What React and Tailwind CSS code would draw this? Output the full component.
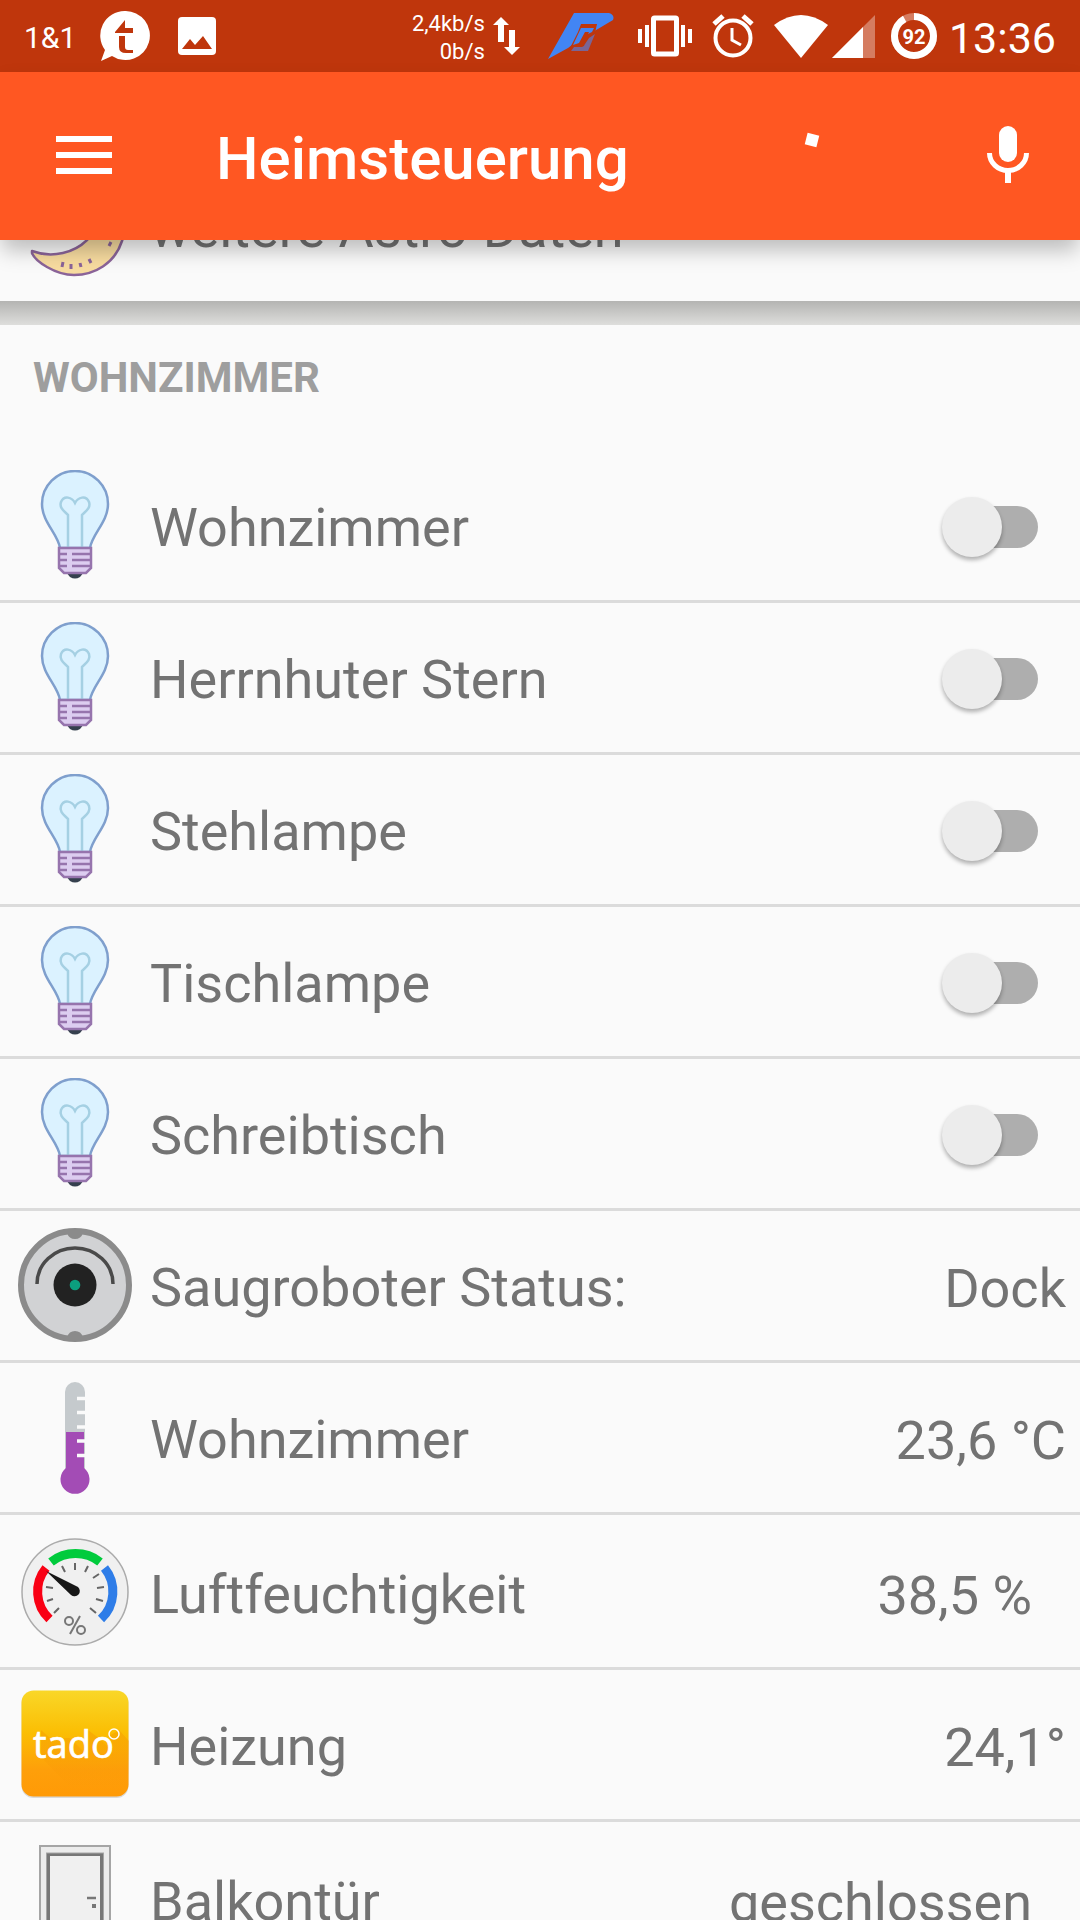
import { useState } from 'react';

const items = [
    { id: 'l1', icon: 'bulb', label: 'Wohnzimmer', type: 'switch' },
    { id: 'l2', icon: 'bulb', label: 'Herrnhuter Stern', type: 'switch' },
    { id: 'l3', icon: 'bulb', label: 'Stehlampe', type: 'switch' },
    { id: 'l4', icon: 'bulb', label: 'Tischlampe', type: 'switch' },
    { id: 'l5', icon: 'bulb', label: 'Schreibtisch', type: 'switch' },
    { id: 'robot', icon: 'robot', label: 'Saugroboter Status:', value: 'Dock' },
    { id: 'temp', icon: 'thermo', label: 'Wohnzimmer', value: '23,6 °C' },
    { id: 'hum', icon: 'gauge', label: 'Luftfeuchtigkeit', value: '38,5 %', link: true },
    { id: 'heat', icon: 'tado', label: 'Heizung', value: '24,1°' },
    { id: 'door', icon: 'door', label: 'Balkontür', value: 'geschlossen', link: true },
];

/* ── Row icons ── */
const Bulb = () => (
    <svg viewBox="0 0 70 110" className="w-[70px] h-[110px]">
        <path d="M20 78C18 64 2 52 2 34a33 33 0 0 1 66 0C68 52 52 64 50 78Z" fill="#dbf2ff" stroke="#7f9fcd" strokeWidth="2.5" />
        <path d="M28 78V45c-4-4-9-7-7-13 3-7 11-5 14 1 3-6 11-8 14-1 2 6-3 9-7 13v33" fill="none" stroke="#a5d0e3" strokeWidth="2.5" />
        <path d="M26 102h18l-4 5q-5 3-10 0Z" fill="#35404e" />
        <path d="M19 78h32v20l-5 5H24l-5-5Z" fill="#dccdf0" stroke="#9674ad" strokeWidth="2.5" />
        <path d="M20 84h7M32 84h18M20 90h7M32 90h18M20 96h7M32 96h18" stroke="#9674ad" strokeWidth="2.5" />
    </svg>
);

const Robot = () => (
    <svg viewBox="0 0 114 114" className="w-[114px] h-[114px]">
        <circle cx="57" cy="57" r="54" fill="#d1d2d4" stroke="#8b8b8b" strokeWidth="6" />
        <path d="M49 5h16q-2 6-8 6t-8-6ZM49 109h16q-2-6-8-6t-8 6Z" fill="#8b8b8b" />
        <path d="M19 56a38 36 0 0 1 76 0" fill="none" stroke="#4a4a4a" strokeWidth="3.5" />
        <circle cx="57" cy="57" r="21.500" fill="#222" />
        <circle cx="57" cy="57" r="5.300" fill="#0c9f7e" />
    </svg>
);

const Thermometer = () => (
    <svg viewBox="0 0 32 114" className="w-8 h-[114px]">
        <path d="M6 92V12a10 10 0 0 1 20 0v80Z" fill="#c5cacd" />
        <path d="M7 52h18v36a14.500 14.500 0 1 1-18 0Z" fill="#a34cb5" />
        <path d="M18 18.500h10M18 32.500h10M18 47h10M18 61h10M18 75.500h10" stroke="#fafafa" strokeWidth="3.500" />
    </svg>
);

const Gauge = () => (
    <svg viewBox="0 0 108 108" className="w-[108px] h-[108px]">
        <circle cx="54" cy="54" r="53" fill="#f0f0f0" stroke="#ababab" strokeWidth="1.500" />
        <g fill="none" strokeWidth="9">
            <path d="M28.500 81A37.500 37.500 0 0 1 25 30" stroke="#f90014" />
            <path d="M30 24a40 40 0 0 1 49 0" stroke="#00cb3c" />
            <path d="M83.500 30a37.500 37.500 0 0 1-3.500 51" stroke="#2e7de8" />
        </g>
        <path d="M54 25v7M41 28l3 6M67 28l-3 6M78 36l-6 4M83 49l-7 1M82 63l-7-2M75 75l-6-5M33 75l5-5M26 63l6-2M25 49l7 1" stroke="#666" strokeWidth="2" />
        <path d="M25 33 57 49a5 5 0 1 1-7 8Z" fill="#171717" />
        <g fill="none" stroke="#777" strokeWidth="2">
            <circle cx="48" cy="83" r="4" />
            <circle cx="60" cy="92" r="4" />
            <path d="m59 78-10 18" />
        </g>
    </svg>
);

const Tado = () => (
    <svg viewBox="0 0 108 108" className="w-[108px] h-[108px]">
        <defs>
            <linearGradient id="tadoBg" x1="0" y1="0" x2="0" y2="1">
                <stop offset="0" stopColor="#f9d728" />
                <stop offset=".4" stopColor="#fbbe03" />
                <stop offset=".75" stopColor="#fe9f0a" />
                <stop offset="1" stopColor="#ff9a06" />
            </linearGradient>
            <linearGradient id="tadoShade" gradientUnits="userSpaceOnUse" x1="0" y1="38" x2="0" y2="98">
                <stop offset="0" stopColor="#f39000" stopOpacity=".4" />
                <stop offset="1" stopColor="#f39000" stopOpacity="0" />
            </linearGradient>
        </defs>
        <rect x=".5" y="1.500" width="107" height="106.500" rx="12" fill="#d9d9d9" />
        <rect x=".5" y=".5" width="107" height="106" rx="12" fill="url(#tadoBg)" />
        <path d="M20 67V40l9 8h20l14 14V40h4l12 9 9 9V46l10-6 10 11V96H48Z" fill="url(#tadoShade)" />
        <text x="12" y="68" fontSize="38" fill="#fff" stroke="#fff" strokeWidth=".7" fontFamily="'Open Sans', sans-serif">tado</text>
        <circle cx="93" cy="44" r="5" fill="none" stroke="#fff" strokeWidth="1.500" />
    </svg>
);

const Door = () => (
    <svg viewBox="0 0 72 108" className="w-[72px] h-[108px]">
        <rect x="1" y="1" width="70" height="110" fill="#ececec" stroke="#a5a5a5" strokeWidth="2" />
        <rect x="7.500" y="8" width="57" height="104" fill="#777" stroke="#a5a5a5" />
        <rect x="11" y="11" width="50" height="100" fill="#f0f0f0" />
        <path d="M48 53h9" stroke="#777" strokeWidth="2.500" />
        <rect x="53" y="59" width="4" height="4" fill="#777" />
    </svg>
);

const Moon = () => (
    <svg viewBox="0 0 100 100" className="w-[100px] h-[100px]">
        <path d="M7 74C28 82 50 75 62 63 76 49 76 30 62 10 90 20 104 44 97 64 90 86 70 98 49 98 30 98 10 84 7 76Z" fill="#f8dca0" stroke="#8b6499" strokeWidth="2.5" strokeLinejoin="round" />
        <path d="m38 85-1 5M46 87v5M55 86l1 4M64 82l2 4M86 65l-2 4" stroke="#8b6499" strokeWidth="3" />
    </svg>
);

const icons = { bulb: Bulb, robot: Robot, thermo: Thermometer, gauge: Gauge, tado: Tado, door: Door, moon: Moon };

const StatusBar = () => (
    <div className="h-[72px] shrink-0 bg-[#bf360c] text-white flex items-center justify-between px-6">
        <div className="flex items-center gap-6">
            <span className="pt-1 text-[30px] leading-9">1&amp;1</span>
            {/* Tapatalk */}
            <svg viewBox="0 0 50 50" className="w-[50px] h-[50px]">
                <path d="M25 0a24.500 24.500 0 1 1-13 45L1 50l4-11A24.500 24.500 0 0 1 25 0Z" fill="#fff" />
                <path d="M15 21 25 9v8h8v5H15ZM19 25h6v11q0 3 3 3h5v3h-7q-7 0-7-6Z" fill="#bf360c" />
            </svg>
            <svg viewBox="0 0 38 38" className="w-[38px] h-[38px] ml-1">
                <rect width="38" height="38" rx="4" fill="#fff" />
                <path d="m4 32 8-10 5 6 8-9 9 13Z" fill="#bf360c" />
            </svg>
        </div>

        <div className="flex items-center">
            <div className="pt-1 text-[22px] leading-7 text-right mr-2">
                <div>2,4kb/s</div>
                <div>0b/s</div>
            </div>
            <svg viewBox="0 0 27 38" className="w-[27px] h-[38px] mr-7">
                <path d="m8 0 8 8h-5v17H5V8H0ZM19 38l8-8h-5V13h-6v17h-5Z" fill="#fff" />
            </svg>
            <svg viewBox="0 0 66 46" className="w-[66px] h-[46px] mr-6">
                <path d="M0 46 26 0h35q6 2 4 7L28 29 20 35Z" fill="#4285f4" />
                <path d="M33 11h16l-2 9-6 4-9 15H20l10-20Z" fill="#bf360c" />
                <path d="m25 32 8-17h13l-2 4-4 2 1-2h-4l-6 11Z" fill="#4285f4" />
                <path d="M41 25 47 21l-7 17H23l3-4h8q2 0 3-3Z" fill="#7a6596" />
            </svg>
            <svg viewBox="0 0 54 42" className="w-[54px] h-[42px] mr-5">
                <rect x="15.500" y="3" width="23" height="36" rx="1" fill="none" stroke="#fff" strokeWidth="5" />
                <path d="M0 14h4v14H0ZM7 10h4v22H7ZM43 10h4v22h-4ZM50 14h4v14h-4Z" fill="#fff" />
            </svg>
            <svg viewBox="0 0 42 44" className="w-[42px] h-[44px] mr-5">
                <circle cx="21" cy="24" r="17.500" fill="none" stroke="#fff" strokeWidth="4" />
                <path d="M2 10 11 2M40 10 31 2" stroke="#fff" strokeWidth="5" />
                <path d="M20 14v12l9 5" fill="none" stroke="#fff" strokeWidth="3" />
            </svg>
            <svg viewBox="0 0 54 43" className="w-[54px] h-[43px] mr-1">
                <path d="M0 10Q27-10 54 10L27 43Z" fill="#fff" />
            </svg>
            <svg viewBox="0 0 43 43" className="w-[43px] h-[43px] mr-4">
                <path d="M0 43 43 0v43Z" fill="#fff" opacity=".35" />
                <path d="M0 43 31 12v31Z" fill="#fff" />
            </svg>
            <svg viewBox="0 0 46 46" className="w-[46px] h-[46px] mr-3">
                <circle cx="23" cy="23" r="19.500" fill="none" stroke="#fff" strokeWidth="7" opacity=".35" />
                <circle cx="23" cy="23" r="19.500" fill="none" stroke="#fff" strokeWidth="7" pathLength="100" strokeDasharray="92 8" transform="rotate(-90 23 23)" />
                <text x="23" y="31" textAnchor="middle" fontSize="20" fontWeight="700" fill="#fff">92</text>
            </svg>
            <span className="pt-1 text-[43px] leading-[48px]">13:36</span>
        </div>
    </div>
);

const TopBar = () => (
    <header className="relative z-10 h-[168px] shrink-0 bg-[#ff5722] text-white flex items-center pl-14 pr-12 pb-[2px] shadow-[0_12px_20px_-2px_rgba(0,0,0,0.25)]">
        <button aria-label="Menü" className="w-14 flex flex-col gap-[10px]">
            <span className="h-[6px] w-full bg-white" />
            <span className="h-[6px] w-full bg-white" />
            <span className="h-[6px] w-full bg-white" />
        </button>
        <h1 className="flex-1 ml-[104px] pt-2 text-[60px] leading-[72px] font-medium">Heimsteuerung</h1>
        {/* loading indicator */}
        <svg viewBox="0 0 48 48" className="w-12 h-12 mr-[148px]">
            <rect x="18" y="3" width="12" height="12" fill="#fff" transform="rotate(14 24 9)" />
        </svg>
        <button aria-label="Spracheingabe">
            <svg viewBox="0 0 48 58" className="w-12 h-[58px]">
                <rect x="15" y="0" width="18" height="36" rx="9" fill="#fff" />
                <path d="M5.500 27a18.500 17.500 0 0 0 37 0" fill="none" stroke="#fff" strokeWidth="5" />
                <path d="M24 45v12" stroke="#fff" strokeWidth="6" />
            </svg>
        </button>
    </header>
);

const Switch = ({ id, checked, onChange }) => (
    <span className="relative flex items-center w-[108px] h-[60px] mr-[30px] mt-[2px]">
        <input id={id} type="checkbox" role="switch" checked={checked} onChange={onChange} className="peer absolute inset-0 w-full h-full opacity-0 z-10 cursor-pointer" />
        <span className="ml-6 w-[72px] h-[42px] rounded-full bg-[#aeaeae] peer-checked:bg-[#ffab91]" />
        <span className="absolute left-0 top-0 w-[60px] h-[60px] rounded-full bg-[#ececec] shadow-[0_3px_4px_rgba(0,0,0,0.3)] peer-checked:left-9 peer-checked:bg-[#ff5722]" />
    </span>
);

const Row = ({ item, on, onToggle }) => {
    const Icon = icons[item.icon];
    return (
        <li className={`flex items-center border-b-[3px] border-[#dbdbdb] ${item.link ? 'h-[155px] pt-1' : 'h-[152px]'}`}>
            <span className="w-[150px] shrink-0 flex justify-center pb-[2px]"><Icon /></span>
            {item.type === 'switch' ? (
                <>
                    <label htmlFor={item.id} className="flex-1 pt-1">{item.label}</label>
                    <Switch id={item.id} checked={on} onChange={onToggle} />
                </>
            ) : (
                <>
                    <span className="flex-1 pt-1">{item.label}</span>
                    <span className={`pt-[6px] ${item.link ? 'pr-12' : 'pr-[14px]'}`}>{item.value}</span>
                </>
            )}
        </li>
    );
};

const App = () => {
    const [active, setActive] = useState({});

    const toggle = (id) => setActive(prev => ({ ...prev, [id]: !prev[id] }));

    return (
        <div className="h-screen flex flex-col overflow-hidden bg-[#fafafa] font-['Roboto',sans-serif]">
            <StatusBar />
            <TopBar />
            <main className="flex-1 min-h-0 overflow-hidden text-[54px] leading-[64px] text-[#737373]">
                {/* list is scrolled a bit under the top bar */}
                <div className="-mt-[88px]">
                    <div className="h-[149px] flex items-center">
                        <span className="w-[150px] shrink-0 flex justify-center"><Moon /></span>
                        <span className="flex-1 pt-1">weitere Astro-Daten</span>
                    </div>
                    <div className="h-6 bg-linear-to-b from-[#b4b4b2] to-[#dededc]" />
                    <h2 className="h-[126px] pl-[33px] pt-[29px] text-[42px] leading-[48px] font-bold text-[#9e9e9e]">WOHNZIMMER</h2>
                    <ul>
                        {items.map(item => (
                            <Row key={item.id} item={item} on={!!active[item.id]} onToggle={() => toggle(item.id)} />
                        ))}
                    </ul>
                </div>
            </main>
        </div>
    );
};

export default App;
